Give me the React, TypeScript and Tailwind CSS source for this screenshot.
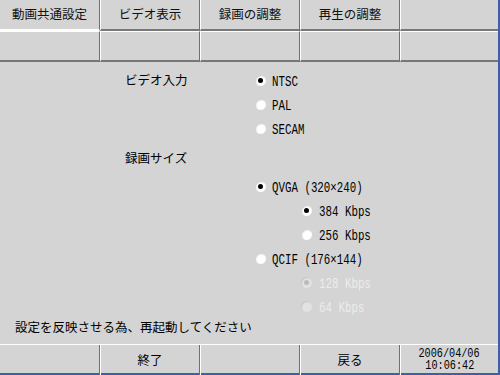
import clsx from "clsx";

const jp = "font-['Noto_Sans_CJK_JP','Noto_Sans_CJK_SC',sans-serif]";
const mono = "font-['Liberation_Mono','DejaVu_Sans_Mono',monospace]";

const tabs = ["動画共通設定", "ビデオ表示", "録画の調整", "再生の調整", ""];
const widths = ["w-[100px]", "w-[100px]", "w-[100px]", "w-[100px]", "w-[98px]"];

function Radio({ checked, disabled }: { checked?: boolean; disabled?: boolean }) {
	return (
		<span
			className={clsx(
				"flex h-[11px] w-[11px] shrink-0 items-center justify-center rounded-full",
				disabled
					? "bg-[#e2e2e2] shadow-[inset_1px_1px_1px_rgba(0,0,0,0.12)]"
					: "bg-white shadow-[inset_1px_1px_1.5px_rgba(0,0,0,0.2)]"
			)}
		>
			{checked && (
				<span
					className={clsx(
						"h-[5px] w-[5px] rounded-full",
						disabled ? "bg-[#bcbcbc]" : "bg-black"
					)}
				/>
			)}
		</span>
	);
}

function Label({ text, disabled }: { text: string; disabled?: boolean }) {
	return (
		<span
			className={clsx(
				mono,
				"inline-block origin-left scale-x-[0.72] whitespace-nowrap text-[15px] leading-none",
				disabled ? "text-[#ececec]" : "text-black"
			)}
		>
			{text}
		</span>
	);
}

function Option({
	label,
	text,
	sub,
	checked,
	disabled,
}: {
	label?: string;
	text: string;
	sub?: boolean;
	checked?: boolean;
	disabled?: boolean;
}) {
	return (
		<div className="flex h-6 items-center">
			<div className={clsx(jp, "shrink-0 text-[12.5px]", sub ? "w-[176px]" : "w-[130px]")}>
				{label}
			</div>
			<Radio checked={checked} disabled={disabled} />
			<div className={sub ? "ml-[7px]" : "ml-[6px]"}>
				<Label text={text} disabled={disabled} />
			</div>
		</div>
	);
}

function Row({ cells, active }: { cells: string[]; active?: boolean }) {
	return (
		<div className="flex">
			{cells.map((t, i) => (
				<div
					key={i}
					className={clsx(
						jp,
						"flex h-[31px] items-center justify-center border-b-2 text-[12.5px] text-[#111]",
						widths[i],
						active && i === 0 ? "border-b-white" : "border-b-[#777]",
						!active && "border-t border-t-white",
						i > 0 && "border-l border-l-white",
						i < 4 && "border-r border-r-[#6f6f6f]"
					)}
				>
					{t}
				</div>
			))}
		</div>
	);
}

export default function App() {
	const bottom = ["", "終了", "", "戻る"];
	return (
		<div className="flex h-[375px] w-[500px] flex-col border-r-2 border-b-2 border-[#3f5ea8] bg-[#d4d4d4]">
			<Row cells={tabs} active />
			<Row cells={["", "", "", "", ""]} />

			<div className="flex flex-1 flex-col">
				<div className="flex flex-col pl-[125px] pt-[6px]">
					<Option label="ビデオ入力" text="NTSC" checked />
					<Option text="PAL" />
					<Option text="SECAM" />
					<div className={clsx(jp, "mt-[6px] flex h-6 items-center text-[12.5px]")}>録画サイズ</div>
					<div className="mt-[4px]">
						<Option text="QVGA (320×240)" checked />
						<Option text="384 Kbps" sub checked />
						<Option text="256 Kbps" sub />
						<Option text="QCIF (176×144)" />
						<Option text="128 Kbps" sub checked disabled />
						<Option text="64 Kbps" sub disabled />
					</div>
				</div>
				<div className={clsx(jp, "mt-auto pb-[8px] pl-[15px] text-[12.5px] leading-[18px]")}>
					設定を反映させる為、再起動してください
				</div>
			</div>

			<div className="flex border-t border-t-white">
				{bottom.map((t, i) => (
					<div
						key={i}
						className={clsx(
							jp,
							"flex h-[30px] items-center justify-center border-r border-r-[#6f6f6f] text-[12.5px]",
							widths[i],
							i > 0 && "border-l border-l-white"
						)}
					>
						{t}
					</div>
				))}
				<div className="flex h-[30px] w-[98px] flex-col items-center justify-center border-l border-l-white">
					<span className={clsx(mono, "inline-block scale-x-[0.85] whitespace-nowrap text-[12px] leading-[12.5px]")}>
						2006/04/06
					</span>
					<span className={clsx(mono, "inline-block scale-x-[0.85] whitespace-nowrap text-[12px] leading-[12.5px]")}>
						10:06:42
					</span>
				</div>
			</div>
		</div>
	);
}
